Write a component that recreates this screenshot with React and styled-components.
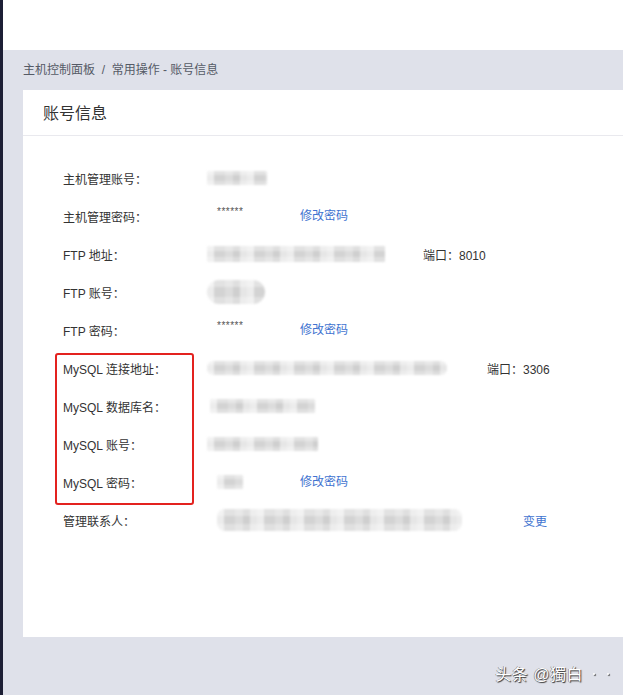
import React from "react";
import styled, { createGlobalStyle } from "styled-components";

const Global = createGlobalStyle`
  html, body {
    margin: 0;
    padding: 0;
    background: #dfe1ea;
    font-family: "Liberation Sans", "Noto Sans CJK SC", sans-serif;
  }
  *, *::before, *::after { box-sizing: border-box; }
`;

const Shell = styled.div`
  display: flex;
  width: 623px;
  height: 695px;
  overflow: hidden;
`;

const Sidebar = styled.div`
  width: 3px;
  flex-shrink: 0;
  background: #1d1f35;
`;

const Main = styled.div`
  flex: 1;
  display: flex;
  flex-direction: column;
  background: #dfe1ea;
`;

const TopBar = styled.div`
  height: 50px;
  background: #ffffff;
  flex-shrink: 0;
`;

const Crumbs = styled.div`
  height: 40px;
  display: flex;
  align-items: center;
  padding: 0 0 4px 20px;
  font-size: 12px;
  color: #555a66;
`;

const Card = styled.section`
  margin-left: 20px;
  height: 547px;
  background: #ffffff;
  display: flex;
  flex-direction: column;
`;

const CardHead = styled.h2`
  margin: 0;
  height: 46px;
  padding: 0 0 2px 20px;
  display: flex;
  align-items: center;
  font-size: 16px;
  font-weight: normal;
  color: #333;
  border-bottom: 1px solid #e9e9ee;
`;

const CardBody = styled.div`
  padding: 23px 0 0 40px;
  display: flex;
  flex-direction: column;
`;

const Row = styled.div`
  height: 38px;
  display: flex;
  align-items: center;
  font-size: 12px;
  color: #333;
`;

const Label = styled.div`
  width: 144px;
  flex-shrink: 0;
`;

const Value = styled.div`
  width: ${(p) => p.$w}px;
  flex-shrink: 0;
  display: flex;
  align-items: center;
  padding-left: ${(p) => p.$pad || 0}px;
`;

const Blur = styled.div`
  width: ${(p) => p.$w}px;
  height: ${(p) => p.$h || 14}px;
  border-radius: ${(p) => p.$r || 1}px;
  background:
    linear-gradient(180deg, rgba(255, 255, 255, 0.35) 0 30%, transparent 30% 70%, rgba(255, 255, 255, 0.3) 70%),
    repeating-linear-gradient(
      90deg,
      #ececec 0px 7px,
      #d3d3d3 7px 18px,
      #dcdcdc 18px 26px,
      #cfcfcf 26px 33px,
      #e6e6e6 33px 40px
    );
  filter: blur(0.8px);
`;

const Stars = styled.span`
  font-size: 10px;
  color: #555;
  letter-spacing: 0.5px;
  margin-top: -10px;
`;

const Action = styled.a`
  color: #4173d0;
  font-size: 12px;
  text-decoration: none;
  margin-top: -4px;
  cursor: pointer;
`;

const Port = styled.span`
  margin-left: ${(p) => p.$gap}px;
  color: #333;
`;

const Highlight = styled.div`
  position: relative;
  &::before {
    content: "";
    position: absolute;
    left: -8px;
    top: 4px;
    width: 139px;
    height: 152px;
    border: 2px solid #e3221f;
    border-radius: 3px;
    pointer-events: none;
  }
`;

const Footer = styled.div`
  flex: 1;
  display: flex;
  align-items: center;
  justify-content: flex-end;
  padding: 0 14px 0 0;
`;

const Mark = styled.span`
  font-size: 16px;
  color: #ffffff;
  text-shadow: 1px 1px 1px #333, -0.5px -0.5px 0 #666;
  letter-spacing: 0.5px;
  margin-top: 14px;
`;

const Dots = styled.span`
  display: flex;
  gap: 12px;
  margin: 16px 0 0 10px;
`;

const Dot = styled.i`
  width: 2px;
  height: 2px;
  border-radius: 50%;
  background: #fff;
  box-shadow: 1px 1px 1px #444;
`;

export default function App() {
  return (
    <>
      <Global />
      <Shell>
        <Sidebar />
        <Main>
          <TopBar />
          <Crumbs>主机控制面板&nbsp;&nbsp;/&nbsp;&nbsp;常用操作 - 账号信息</Crumbs>
          <Card>
            <CardHead>账号信息</CardHead>
            <CardBody>
              <Row>
                <Label>主机管理账号：</Label>
                <Value $w={93}><Blur $w={60} /></Value>
              </Row>
              <Row>
                <Label>主机管理密码：</Label>
                <Value $w={93} $pad={10}><Stars>******</Stars></Value>
                <Action>修改密码</Action>
              </Row>
              <Row>
                <Label>FTP 地址：</Label>
                <Value $w={178}><Blur $w={178} $h={16} /></Value>
                <Port $gap={38}>端口：8010</Port>
              </Row>
              <Row>
                <Label>FTP 账号：</Label>
                <Value $w={93}><Blur $w={58} $h={24} $r={12} /></Value>
              </Row>
              <Row>
                <Label>FTP 密码：</Label>
                <Value $w={93} $pad={10}><Stars>******</Stars></Value>
                <Action>修改密码</Action>
              </Row>
              <Highlight>
                <Row>
                  <Label>MySQL 连接地址：</Label>
                  <Value $w={240}><Blur $w={240} $h={14} $r={6} /></Value>
                  <Port $gap={40}>端口：3306</Port>
                </Row>
                <Row>
                  <Label>MySQL 数据库名：</Label>
                  <Value $w={108} $pad={3}><Blur $w={105} /></Value>
                </Row>
                <Row>
                  <Label>MySQL 账号：</Label>
                  <Value $w={111}><Blur $w={111} /></Value>
                </Row>
                <Row>
                  <Label>MySQL 密码：</Label>
                  <Value $w={93} $pad={10}><Blur $w={26} /></Value>
                  <Action>修改密码</Action>
                </Row>
              </Highlight>
              <Row>
                <Label>管理联系人：</Label>
                <Value $w={255} $pad={10}><Blur $w={245} $h={22} $r={8} /></Value>
                <Port $gap={61}><Action>变更</Action></Port>
              </Row>
            </CardBody>
          </Card>
          <Footer>
            <Mark>头条 @獨白</Mark>
            <Dots><Dot /><Dot /></Dots>
          </Footer>
        </Main>
      </Shell>
    </>
  );
}
